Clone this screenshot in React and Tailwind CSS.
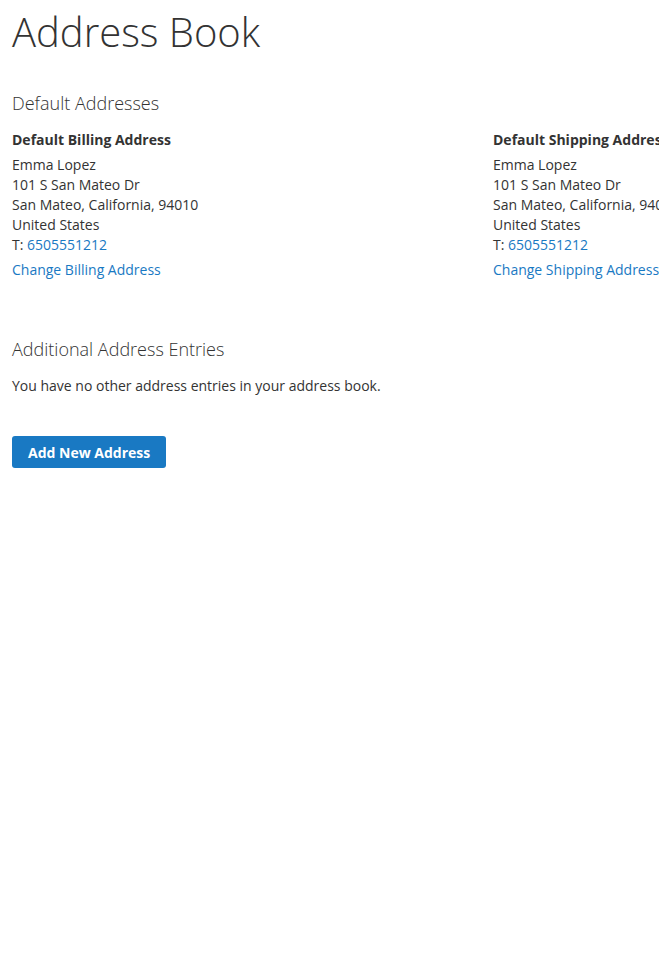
const AddressBlock = ({ title, linkText }) => (
  <div className="w-[481px] shrink-0">
    <h3 className="text-[14px] font-bold leading-[20px] text-[#333]">{title}</h3>
    <address className="not-italic mt-[5px] text-[14px] leading-[20px] text-[#333]">
      Emma Lopez
      <br />
      101 S San Mateo Dr
      <br />
      San Mateo, California, 94010
      <br />
      United States
      <br />
      T: <a href="#" className="text-[#1979c3]">6505551212</a>
    </address>
    <a href="#" className="block mt-[5px] text-[14px] leading-[20px] text-[#1979c3]">
      {linkText}
    </a>
  </div>
);

const App = () => {
  return (
    <div className="w-[659px] min-h-[960px] overflow-hidden bg-white px-3 font-['Open_Sans',sans-serif] text-[#333]">
      <h1 className="pt-[6px] text-[40px] font-light leading-[52px] whitespace-nowrap">Address Book</h1>

      <section className="mt-[33px]">
        <h2 className="text-[18px] font-light leading-[24px] whitespace-nowrap">Default Addresses</h2>
        <div className="mt-[15px] flex whitespace-nowrap">
          <AddressBlock title="Default Billing Address" linkText="Change Billing Address" />
          <AddressBlock title="Default Shipping Address" linkText="Change Shipping Address" />
        </div>
      </section>

      <section className="mt-[57px]">
        <h2 className="text-[18px] font-light leading-[24px]">Additional Address Entries</h2>
        <p className="mt-[15px] text-[14px] leading-[20px]">
          You have no other address entries in your address book.
        </p>
      </section>

      <button className="mt-[40px] h-[32px] px-[16px] rounded-[3px] bg-[#1979c3] text-[14px] font-bold text-white">
        Add New Address
      </button>
    </div>
  );
};

export default App;
